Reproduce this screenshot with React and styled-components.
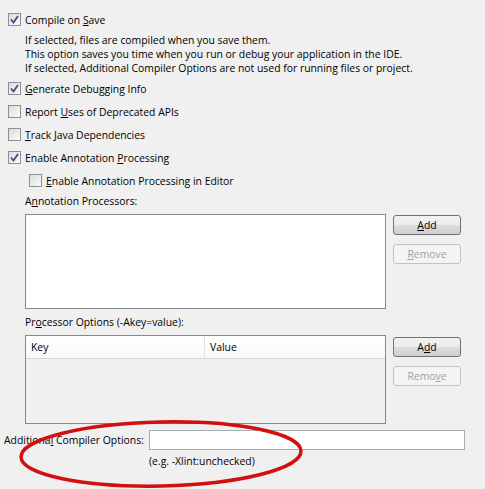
import styled, { createGlobalStyle } from "styled-components";

const Global = createGlobalStyle`
  html, body {
    margin: 0;
    background: #f0f0f0;
  }
  * {
    box-sizing: border-box;
  }
`;

const Panel = styled.div`
  position: relative;
  width: 485px;
  height: 489px;
  padding: 8px 0 0 8px;
  font-family: "Open Sans", "Liberation Sans", sans-serif;
  font-size: 10.4px;
  color: #000;
  background: #f0f0f0;
  overflow: hidden;
`;

const Row = styled.label`
  display: flex;
  align-items: center;
  gap: 4px;
  height: 23px;
  margin-left: ${(p) => p.$indent || 0}px;
`;

const Box = styled.span`
  width: 13px;
  height: 13px;
  border: 1px solid #8e8f8f;
  background: linear-gradient(135deg, #dcdcdc, #fbfbfb);
  display: flex;
  align-items: center;
  justify-content: center;
  flex: none;
`;

const Note = styled.div`
  margin: 2px 0 2px 17px;
  line-height: 14px;
`;

const Key = styled.u`
  text-decoration: underline;
`;

const Caption = styled.div`
  margin: ${(p) => p.$top || 0}px 0 0 17px;
  line-height: 16px;
`;

const Section = styled.div`
  display: flex;
  gap: 7px;
  margin: 5px 0 0 17px;
`;

const ListBox = styled.div`
  width: 361px;
  height: ${(p) => p.$h}px;
  border: 1px solid #828790;
  background: ${(p) => (p.$white ? "#fff" : "#f0f0f0")};
`;

const Buttons = styled.div`
  display: flex;
  flex-direction: column;
  gap: 9px;
  padding-top: ${(p) => p.$top || 0}px;
`;

const Button = styled.button`
  width: 68px;
  height: 20px;
  padding: 0;
  font: inherit;
  border-radius: 3px;
  border: 1px solid ${(p) => (p.disabled ? "#bfc3c6" : "#707070")};
  color: ${(p) => (p.disabled ? "#a0a0a0" : "#000")};
  background: ${(p) =>
    p.disabled
      ? "#f4f4f4"
      : "linear-gradient(#f2f2f2 0%, #ebebeb 50%, #dddddd 51%, #cfcfcf 100%)"};
`;

const Header = styled.div`
  display: grid;
  grid-template-columns: 179px 1fr;
  height: 23px;
  background: linear-gradient(#ffffff, #f7f8f9);
  border-bottom: 1px solid #d5d5d5;
`;

const HeadCell = styled.div`
  display: flex;
  align-items: center;
  padding-left: 5px;
  border-right: 1px solid ${(p) => (p.$last ? "transparent" : "#e3e3e3")};
`;

const OptionRow = styled.div`
  display: flex;
  align-items: center;
  margin-top: 6px;
  height: 20px;
`;

const OptionLabel = styled.div`
  width: 145px;
  margin-left: -4px;
  white-space: nowrap;
`;

const TextInput = styled.input`
  width: 316px;
  height: 20px;
  border: 1px solid #a5acb5;
  background: #fff;
`;

const Hint = styled.div`
  margin: 4px 0 0 141px;
  line-height: 14px;
`;

// red marker circled round the compiler options field
const Ellipse = styled.svg`
  position: absolute;
  left: 14px;
  top: 413px;
  pointer-events: none;
`;

const Check = () => (
  <svg width="9" height="9" viewBox="0 0 9 9">
    <path d="M1 4.5 L3.5 7.5 L8 1" fill="none" stroke="#3b4c8e" strokeWidth="1.8" />
  </svg>
);

const CheckRow = ({ checked, indent, children }) => (
  <Row $indent={indent}>
    <Box>{checked && <Check />}</Box>
    <span>{children}</span>
  </Row>
);

export default function App() {
  return (
    <Panel>
      <Global />
      <CheckRow checked>
        Compile on <Key>S</Key>ave
      </CheckRow>
      <Note>
        If selected, files are compiled when you save them.
        <br />
        This option saves you time when you run or debug your application in the IDE.
        <br />
        If selected, Additional Compiler Options are not used for running files or project.
      </Note>
      <CheckRow checked>
        <Key>G</Key>enerate Debugging Info
      </CheckRow>
      <CheckRow>
        Report <Key>U</Key>ses of Deprecated APIs
      </CheckRow>
      <CheckRow>
        <Key>T</Key>rack Java Dependencies
      </CheckRow>
      <CheckRow checked>
        Enable Annotation <Key>P</Key>rocessing
      </CheckRow>
      <CheckRow indent={21}>
        <Key>E</Key>nable Annotation Processing in Editor
      </CheckRow>

      <Caption $top={1}>
        A<Key>n</Key>notation Processors:
      </Caption>
      <Section>
        <ListBox $h={95} $white />
        <Buttons $top={1}>
          <Button>
            <Key>A</Key>dd
          </Button>
          <Button disabled>
            <Key>R</Key>emove
          </Button>
        </Buttons>
      </Section>

      <Caption $top={5}>
        Pr<Key>o</Key>cessor Options (-Akey=value):
      </Caption>
      <Section>
        <ListBox $h={89}>
          <Header>
            <HeadCell>Key</HeadCell>
            <HeadCell $last>Value</HeadCell>
          </Header>
        </ListBox>
        <Buttons $top={2}>
          <Button>
            A<Key>d</Key>d
          </Button>
          <Button disabled>
            Remo<Key>v</Key>e
          </Button>
        </Buttons>
      </Section>

      <OptionRow>
        <OptionLabel>
          Additiona<Key>l</Key> Compiler Options:
        </OptionLabel>
        <TextInput />
      </OptionRow>
      <Hint>(e.g. -Xlint:unchecked)</Hint>

      <Ellipse width="296" height="76" viewBox="0 0 296 76">
        <ellipse
          cx="147"
          cy="41"
          rx="140"
          ry="32"
          transform="rotate(-1.2 147 41)"
          fill="none"
          stroke="#d40f0f"
          strokeWidth="3.5"
        />
      </Ellipse>
    </Panel>
  );
}
